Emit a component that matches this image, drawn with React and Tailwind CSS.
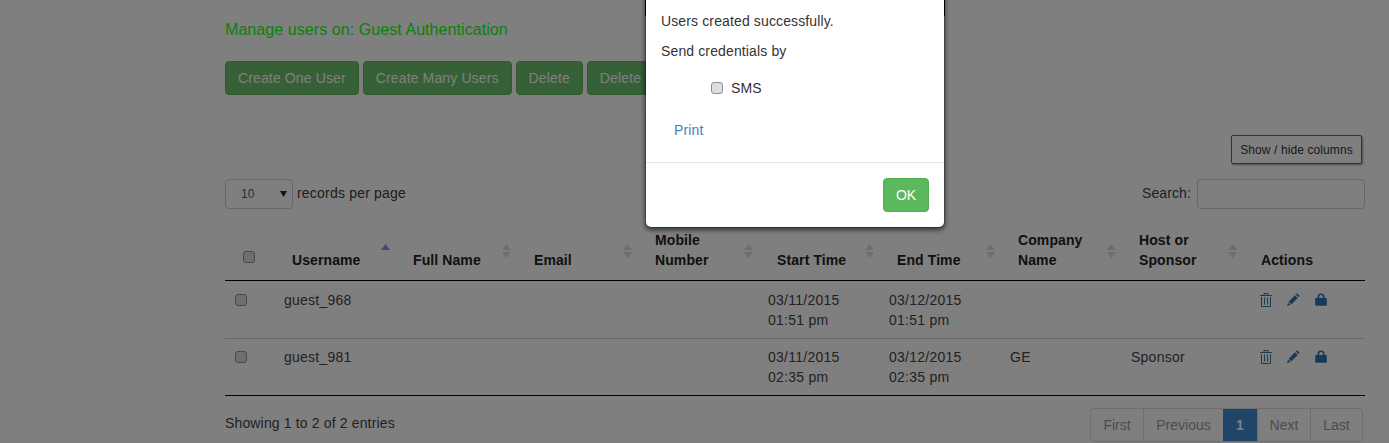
import React from "react";

function Trash() {
  return (
    <svg width="12" height="14" viewBox="0 0 12 14" fill="none" stroke="currentColor" strokeWidth="1">
      <path d="M0 2.500h12M4 2.500V.5h4v2" />
      <path d="M1.500 4V13.500H10.500V4" />
      <path d="M4.500 4.500v7M7.500 4.500v7" />
    </svg>
  );
}
function Pencil() {
  return (
    <svg width="13" height="13" viewBox="0 0 13 13" fill="currentColor">
      <path d="M10 .3l2.700 2.700-1.200 1.200L8.800 1.500zM8 2.300L10.700 5 4.300 11.400 1.600 8.700zM1 9.400l2.600 2.600-3.500 1z" />
    </svg>
  );
}
function Lock() {
  return (
    <svg width="12" height="13" viewBox="0 0 12 13" fill="currentColor">
      <path fillRule="evenodd" d="M2.500 5V3.600C2.500 1.600 4 .4 6 .4s3.500 1.200 3.500 3.200V5H11a.8.8 0 0 1 .8.8v6.200a.8.8 0 0 1-.8.8H1a.8.8 0 0 1-.8-.8V5.800A.8.8 0 0 1 1 5zM4.200 5h3.600V3.700C7.800 2.600 7 2 6 2s-1.800.6-1.800 1.700z" />
    </svg>
  );
}

function Sort({ active }) {
  return (
    <svg className="absolute top-[18px] right-[7px]" width="9" height="16" viewBox="0 0 9 16">
      <path d="M4.500 1L9 7H0z" fill={active ? "#8a8af0" : "#dcdcdc"} />
      {!active && <path d="M0 9h9L4.500 15z" fill="#dcdcdc" />}
    </svg>
  );
}

const Box = ({ className = "" }) => (
  <input
    type="checkbox"
    className={"appearance-none block w-[12px] h-[12px] rounded-[3px] border border-[#8f8f8f] bg-[#dedede] " + className}
  />
);

const headers = [
  ["Username", "pl-[16px]", true],
  ["Full Name", "pl-[16px]"],
  ["Email", "pl-[16px]"],
  [<>Mobile<br />Number</>, "pl-[16px]"],
  ["Start Time", "pl-[17px]"],
  ["End Time", "pl-[16px]"],
  [<>Company<br />Name</>, "pl-[16px]"],
  [<>Host or<br />Sponsor</>, "pl-[16px]"],
];

const rows = [
  { user: "guest_968", d1: "03/11/2015", t1: "01:51 pm", d2: "03/12/2015", t2: "01:51 pm", co: "", host: "" },
  { user: "guest_981", d1: "03/11/2015", t1: "02:35 pm", d2: "03/12/2015", t2: "02:35 pm", co: "GE", host: "Sponsor" },
];

const Btn = ({ children }) => (
  <button className="h-[34px] px-[12px] rounded-[4px] bg-[#6cc06c] border border-[#62b462] text-white text-[14px] tracking-[0.13px] whitespace-nowrap">
    <span className="block mb-px">{children}</span>
  </button>
);

const Page = ({ children, active, className = "" }) => (
  <span className={"h-[32px] flex items-center justify-center border-l border-[#dddddd] first:border-l-0 text-[14px] " + (active ? "bg-[#3e8ad0] text-white font-bold border-l-0 " : "text-[#999999] ") + className}>
    {children}
  </span>
);

export default function App() {
  return (
    <div className="relative h-[443px] overflow-hidden bg-white font-['Liberation_Sans',Arial,sans-serif] text-[14px] leading-[20px] text-[#444444]">
      <main className="ml-[225px] w-[1140px]">
        <h1 className="pt-[20px] h-[61px] text-[16px] leading-[20px] tracking-[0.07px] text-[#14ff14]">
          Manage users on: Guest Authentication
        </h1>
        <div className="flex gap-[4px]">
          <Btn>Create One User</Btn>
          <Btn>Create Many Users</Btn>
          <Btn>Delete</Btn>
          <Btn>Delete Selected</Btn>
        </div>
        <div className="flex justify-end mt-[40px] pr-[3px]">
          <button className="w-[131px] h-[29px] text-[12px] tracking-[0.1px] text-[#333333] bg-white border border-[#666666] rounded-[2px] shadow-[1px_1px_2px_rgba(0,0,0,0.4)]">
            Show / hide columns
          </button>
        </div>
        <div className="flex justify-between items-center mt-[15px] h-[30px]">
          <div className="flex items-center gap-[4px]">
            <div className="relative w-[68px] h-[30px]">
              <select className="appearance-none w-full h-full pl-[15px] text-[12px] text-[#4a5a78] bg-white border border-[#cccccc] rounded-[4px]">
                <option>10</option>
              </select>
              <svg className="absolute right-[6px] top-[12px]" width="7" height="6" viewBox="0 0 7 6">
                <path d="M0 0h7L3.500 6z" fill="#222222" />
              </svg>
            </div>
            <span className="mb-[2px] text-[#3a3a3a] tracking-[0.2px]">records per page</span>
          </div>
          <div className="flex items-center gap-[6px]">
            <span className="mb-[2px] tracking-[0.1px]">Search:</span>
            <input className="w-[168px] h-[30px] bg-white border border-[#cccccc] rounded-[4px]" />
          </div>
        </div>

        <table className="table-fixed w-[1140px] mt-[16px] border-collapse">
          <colgroup>
            <col className="w-[51px]" />
            {Array.from({ length: 9 }).map((_, i) => (
              <col key={i} className="w-[121px]" />
            ))}
          </colgroup>
          <thead>
            <tr className="border-b border-[#000000] h-[55px]">
              <th className="align-bottom pb-[17px] pl-[18px] font-normal">
                <Box />
              </th>
              {headers.map(([label, pl, active], i) => (
                <th key={i} className={"relative align-bottom pb-[10px] text-left font-bold tracking-[0.1px] text-[#222222] " + pl}>
                  {label}
                  <Sort active={active} />
                </th>
              ))}
              <th className="align-bottom pb-[10px] pl-[17px] text-left font-bold tracking-[0.1px] text-[#222222]">Actions</th>
            </tr>
          </thead>
          <tbody>
            {rows.map((r, i) => {
              const pad = i === 0 ? "pt-[9px]" : "pt-[8px]";
              const cell = "align-top px-[8px] tracking-[0.25px] " + pad;
              return (
                <tr key={i} className={i === 0 ? "border-b border-[#cfcfcf] h-[58px]" : "border-b border-[#000000] h-[57px]"}>
                  <td className={"align-top pl-[10px] " + pad}>
                    <Box className="mt-[4px]" />
                  </td>
                  <td className={cell}>{r.user}</td>
                  <td />
                  <td />
                  <td />
                  <td className={cell}>{r.d1}<br />{r.t1}</td>
                  <td className={cell}>{r.d2}<br />{r.t2}</td>
                  <td className={cell}>{r.co}</td>
                  <td className={cell}>{r.host}</td>
                  <td className={"align-top pl-[16px] text-[#2d74b4] " + pad}>
                    <div className="flex items-center gap-[15px] h-[20px]">
                      <span className="text-[#2f7f9f] flex"><Trash /></span>
                      <Pencil />
                      <Lock />
                    </div>
                  </td>
                </tr>
              );
            })}
          </tbody>
        </table>

        <div className="flex justify-between mt-[12px]">
          <span className="mt-[5px] tracking-[0.15px]">Showing 1 to 2 of 2 entries</span>
          <div className="flex mr-[2px] border border-[#dddddd] rounded-[4px] overflow-hidden">
            <Page className="w-[52px]">First</Page>
            <Page className="w-[80px]">Previous</Page>
            <Page active className="w-[34px]">1</Page>
            <Page className="w-[53px]">Next</Page>
            <Page className="w-[52px]">Last</Page>
          </div>
        </div>
      </main>

      <div className="absolute inset-0 bg-black/50" />

      <div className="absolute left-[645px] top-[-20px] w-[300px] h-[248px] bg-white border border-[rgba(0,0,0,0.2)] bg-clip-padding rounded-[6px] shadow-[0_2px_5px_rgba(0,0,0,0.6)] text-[#333333]">
        <span className="absolute left-[-1px] top-[19px] w-px h-[16px] bg-black" />
        <span className="absolute right-[-1px] top-[19px] w-px h-[16px] bg-black" />
        <span className="absolute left-[-1px] top-[114px] w-px h-[16px] bg-[#2e5c2e]" />
        <div className="pt-[30px] pl-[15px] h-[182px] border-b border-[#e5e5e5] tracking-[0.13px]">
          <p>Users created successfully.</p>
          <p className="mt-[10px]">Send credentials by</p>
          <label className="flex items-center gap-[8px] mt-[17px] ml-[50px] h-[20px]">
            <Box />
            <span>SMS</span>
          </label>
          <a className="block mt-[22px] ml-[13px] text-[#4a80c0]">Print</a>
        </div>
        <div className="flex justify-end pt-[15px] pr-[15px]">
          <button className="w-[46px] h-[34px] rounded-[4px] bg-[#5cb85c] border border-[#4cae4c] text-white text-[14px]">OK</button>
        </div>
      </div>
    </div>
  );
}
